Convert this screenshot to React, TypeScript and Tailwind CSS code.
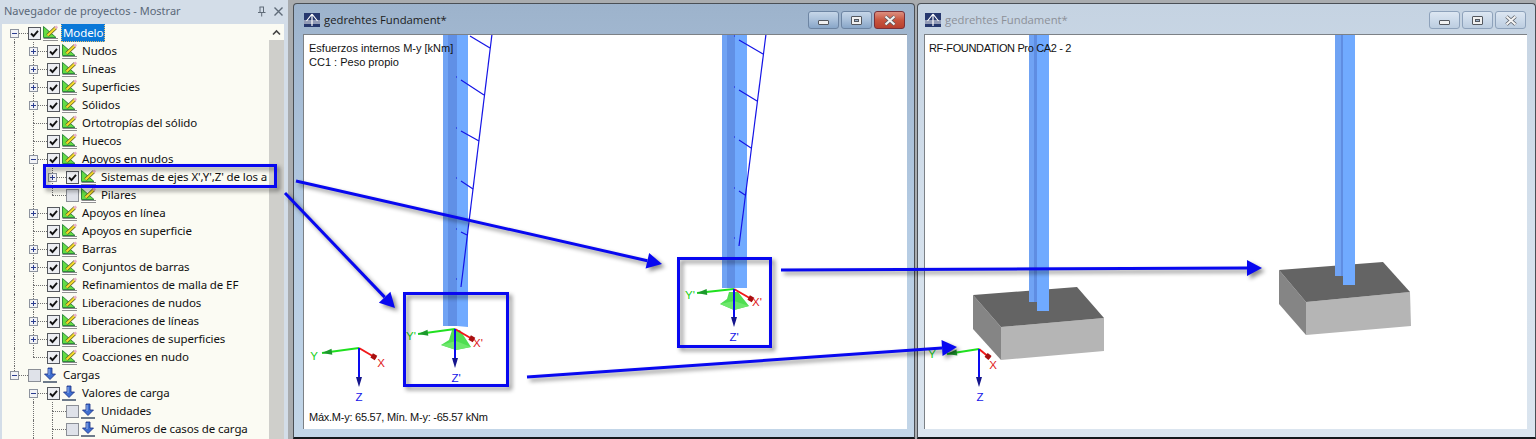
type Row = {
  label: string;
  depth: number;
  exp?: 'plus' | 'minus';
  checked: boolean;
  icon: 'model' | 'load';
  guides: number[];
  up?: boolean;
  down?: boolean;
};

const rows: Row[] = [
  { label: 'Modelo', depth: 0, exp: 'minus', checked: true, icon: 'model', guides: [], up: false, down: true },
  { label: 'Nudos', depth: 1, exp: 'plus', checked: true, icon: 'model', guides: [0], down: true },
  { label: 'Líneas', depth: 1, exp: 'plus', checked: true, icon: 'model', guides: [0], down: true },
  { label: 'Superficies', depth: 1, exp: 'plus', checked: true, icon: 'model', guides: [0], down: true },
  { label: 'Sólidos', depth: 1, exp: 'plus', checked: true, icon: 'model', guides: [0], down: true },
  { label: 'Ortotropías del sólido', depth: 1, checked: true, icon: 'model', guides: [0], down: true },
  { label: 'Huecos', depth: 1, checked: true, icon: 'model', guides: [0], down: true },
  { label: 'Apoyos en nudos', depth: 1, exp: 'minus', checked: true, icon: 'model', guides: [0], down: true },
  { label: "Sistemas de ejes X',Y',Z' de los a", depth: 2, exp: 'plus', checked: true, icon: 'model', guides: [0, 1], down: true },
  { label: 'Pilares', depth: 2, checked: false, icon: 'model', guides: [0, 1], down: false },
  { label: 'Apoyos en línea', depth: 1, exp: 'plus', checked: true, icon: 'model', guides: [0], down: true },
  { label: 'Apoyos en superficie', depth: 1, checked: true, icon: 'model', guides: [0], down: true },
  { label: 'Barras', depth: 1, exp: 'plus', checked: true, icon: 'model', guides: [0], down: true },
  { label: 'Conjuntos de barras', depth: 1, exp: 'plus', checked: true, icon: 'model', guides: [0], down: true },
  { label: 'Refinamientos de malla de EF', depth: 1, checked: true, icon: 'model', guides: [0], down: true },
  { label: 'Liberaciones de nudos', depth: 1, exp: 'plus', checked: true, icon: 'model', guides: [0], down: true },
  { label: 'Liberaciones de líneas', depth: 1, exp: 'plus', checked: true, icon: 'model', guides: [0], down: true },
  { label: 'Liberaciones de superficies', depth: 1, exp: 'plus', checked: true, icon: 'model', guides: [0], down: true },
  { label: 'Coacciones en nudo', depth: 1, checked: true, icon: 'model', guides: [0], down: false },
  { label: 'Cargas', depth: 0, exp: 'minus', checked: false, icon: 'load', guides: [], down: false },
  { label: 'Valores de carga', depth: 1, exp: 'minus', checked: true, icon: 'load', guides: [], up: false, down: true },
  { label: 'Unidades', depth: 2, checked: false, icon: 'load', guides: [1], down: true },
  { label: 'Números de casos de carga', depth: 2, checked: false, icon: 'load', guides: [1], down: true },
];

function ModelIcon() {
  return (
    <svg width="17" height="17" viewBox="0 0 17 17" className="shrink-0">
      <polygon points="1.5,1.5 1.5,12.5 14,12.5" fill="#63dc42" stroke="#2f8a3e" />
      <path d="M5.5 10.5 L14 2.5" stroke="#5a5a28" strokeWidth="3.6" />
      <path d="M5.5 10.5 L14 2.5" stroke="#f5dc2a" strokeWidth="2.2" />
      <path d="M13.2 3.3 L15.2 1.4" stroke="#eab0cc" strokeWidth="2.6" />
      <rect x="1" y="13" width="15" height="3" fill="#ffffff" />
      <path d="M1.5 15.5 H16" stroke="#222222" strokeWidth="1" strokeDasharray="1 1" />
      <path d="M1.5 13.5 H16" stroke="#8a8a8a" strokeWidth="1" />
    </svg>
  );
}

function LoadIcon() {
  return (
    <svg width="17" height="17" viewBox="0 0 17 17" className="shrink-0">
      <path d="M6 1 H10 V7 H13.5 L8 12.5 L2.5 7 H6 Z" fill="#3f6fd0" stroke="#1b2f80" strokeWidth="0.8" />
      <path d="M7 2 V8" stroke="#9db8ee" strokeWidth="1" />
      <path d="M1 15 H15" stroke="#4a5a70" strokeWidth="1.6" />
    </svg>
  );
}

function Expander({ kind }: { kind: 'plus' | 'minus' }) {
  return (
    <div className="absolute left-[5px] top-[5px] flex h-[9px] w-[9px] items-center justify-center border border-[#8d939e] bg-[#f2f3f6]">
      <svg width="7" height="7" viewBox="0 0 7 7">
        <path d="M1 3.5 H6" stroke="#2b3d8f" strokeWidth="1" />
        {kind === 'plus' && <path d="M3.5 1 V6" stroke="#2b3d8f" strokeWidth="1" />}
      </svg>
    </div>
  );
}

function Check({ checked }: { checked: boolean }) {
  return (
    <div
      className={
        'flex h-[13px] w-[13px] shrink-0 items-center justify-center border ' +
        (checked ? 'border-[#55585e] bg-[#eceef2]' : 'border-[#8b8f96] bg-[#dfe2e9]')
      }
    >
      {checked && (
        <svg width="11" height="11" viewBox="0 0 11 11">
          <path d="M2 5.5 L4.5 8 L9 2.8" fill="none" stroke="#111111" strokeWidth="1.9" />
        </svg>
      )}
    </div>
  );
}

function GuideCell({ on }: { on: boolean }) {
  return (
    <div className="relative h-full w-[19px] shrink-0">
      {on && <div className="absolute bottom-0 left-[9px] top-0 border-l border-dotted border-[#6f6f6f]" />}
    </div>
  );
}

function TreeRow({ row, first }: { row: Row; first: boolean }) {
  const cols = Array.from({ length: row.depth }, (_, i) => i);
  const up = row.up !== false;
  return (
    <div className="flex h-[18px] shrink-0 items-center pl-[3px]">
      {cols.map((i) => (
        <GuideCell key={i} on={row.guides.includes(i)} />
      ))}
      <div className="relative h-full w-[19px] shrink-0">
        {up && <div className="absolute left-[9px] top-0 h-[9px] border-l border-dotted border-[#6f6f6f]" />}
        {row.down && <div className="absolute bottom-0 left-[9px] h-[9px] border-l border-dotted border-[#6f6f6f]" />}
        <div className="absolute left-[9px] top-[9px] w-[14px] border-t border-dotted border-[#6f6f6f]" />
        {row.exp && <Expander kind={row.exp} />}
      </div>
      <div className="ml-[4px] flex items-center gap-[1px]">
        <Check checked={row.checked} />
        {row.icon === 'model' ? <ModelIcon /> : <LoadIcon />}
      </div>
      <span
        className={
          'ml-[2px] -mt-[1px] whitespace-nowrap px-[1px] text-[11.5px] leading-[17px] tracking-[-0.1px] ' +
          (first
            ? 'border border-dotted border-[#e6c070] bg-[#0a78d8] text-white'
            : 'border border-transparent text-[#101010]')
        }
      >
        {row.label}
      </span>
    </div>
  );
}

function Navigator() {
  return (
    <aside className="flex h-full w-[288px] shrink-0 flex-col bg-[#d3dde8] font-['Noto_Sans',sans-serif]">
      <div className="flex h-[22px] shrink-0 items-center justify-between pl-[4px] pr-[4px]">
        <span className="text-[11px] text-[#5a6878]">Navegador de proyectos - Mostrar</span>
        <div className="flex items-center gap-[6px]">
          <svg width="11" height="11" viewBox="0 0 11 11">
            <path d="M3.5 1 H8 M4 1 V6 M7.5 1 V6 M2 6.5 H9.5 M5.7 6.5 V10.5" stroke="#5f6b78" strokeWidth="1" fill="none" />
          </svg>
          <svg width="11" height="11" viewBox="0 0 11 11">
            <path d="M1.5 1.5 L9.5 9.5 M9.5 1.5 L1.5 9.5" stroke="#5f6b78" strokeWidth="1.4" />
          </svg>
        </div>
      </div>
      <div className="mt-[2px] flex min-h-0 flex-1 pl-[2px] pr-[4px]">
        <div className="flex min-w-0 flex-1 flex-col overflow-hidden bg-[#fbfbf3]">
          {rows.map((row, i) => (
            <TreeRow key={row.label} row={row} first={i === 0} />
          ))}
          <div className="flex h-[18px] shrink-0 pl-[3px]">
            <GuideCell on={false} />
            <GuideCell on={true} />
            <GuideCell on={true} />
          </div>
        </div>
        <div className="flex w-[15px] shrink-0 flex-col bg-[#cfcfcb]">
          <div className="flex h-[16px] shrink-0 items-center justify-center bg-[#fbfbf3]">
            <svg width="9" height="7" viewBox="0 0 9 7">
              <path d="M1 5.5 L4.5 2 L8 5.5" fill="none" stroke="#444444" strokeWidth="1.6" />
            </svg>
          </div>
        </div>
      </div>
    </aside>
  );
}

function WinButton({ kind, active }: { kind: 'min' | 'max' | 'close'; active: boolean }) {
  const red = kind === 'close' && active;
  return (
    <div
      className={
        'flex h-[18px] w-[31px] items-center justify-center rounded-[3px] border ' +
        (red
          ? 'border-[#7a3038] bg-gradient-to-b from-[#dc8f80] via-[#c8553f] to-[#b8402f]'
          : active
            ? 'border-[#6d85a3] bg-gradient-to-b from-[#c6d6e8] via-[#a9c0da] to-[#88a6c8]'
            : 'border-[#8ea2bb] bg-gradient-to-b from-[#dde7f2] via-[#ccdaea] to-[#bccde0]')
      }
    >
      {kind === 'min' && (
        <div className="mt-[5px] h-[5px] w-[11px] rounded-[1px] border border-[#53575e] bg-[#f1f1f1]" />
      )}
      {kind === 'max' && (
        <div className="flex h-[9px] w-[11px] items-center justify-center rounded-[1px] border border-[#53575e] bg-[#f1f1f1]">
          <div className="h-[3px] w-[5px] border border-[#53575e] bg-[#9db2cb]" />
        </div>
      )}
      {kind === 'close' && (
        <svg width="14" height="11" viewBox="0 0 14 11">
          <path d="M2.5 1.5 L11.5 9.5 M11.5 1.5 L2.5 9.5" stroke="#555a62" strokeWidth="3.6" />
          <path d="M2.5 1.5 L11.5 9.5 M11.5 1.5 L2.5 9.5" stroke="#f4f4f4" strokeWidth="2.2" />
        </svg>
      )}
    </div>
  );
}

function AppLogo() {
  return (
    <svg width="16" height="14" viewBox="0 0 16 14" className="shrink-0">
      <rect width="16" height="14" fill="#26386e" />
      <path d="M0 8 H16 M0 10 H16" stroke="#ffffff" strokeWidth="1" />
      <path d="M8 1 L2.5 8 M8 1 L13.5 8 M8 1 V13" stroke="#ffffff" strokeWidth="1.2" fill="none" />
    </svg>
  );
}

function Window({
  active,
  frameClass,
  barClass,
  clientClass,
  children,
  viewBox,
  drawing,
}: {
  active: boolean;
  frameClass: string;
  barClass: string;
  clientClass: string;
  children: React.ReactNode;
  viewBox: string;
  drawing: React.ReactNode;
}) {
  return (
    <div
      className={
        'flex h-[436px] shrink-0 flex-col rounded-t-[4px] border border-b-2 border-[#4a4f55] border-b-[#15181c] ' +
        frameClass +
        (active
          ? ' bg-gradient-to-b from-[#9db3cc] via-[#b4cbe3] to-[#c3d6e8]'
          : ' bg-gradient-to-b from-[#c5d3e2] via-[#d4e0ec] to-[#dbe5ef]')
      }
    >
      <div className={'flex h-[30px] shrink-0 items-center justify-between pt-[2px] ' + barClass}>
        <div className="flex items-center gap-[4px]">
          <AppLogo />
          <span
            className={
              "font-['Open_Sans',sans-serif] text-[11.3px] " + (active ? 'text-[#1c1c1c]' : 'text-[#8c9098]')
            }
          >
            gedrehtes Fundament*
          </span>
        </div>
        <div className="flex gap-[2px]">
          <WinButton kind="min" active={active} />
          <WinButton kind="max" active={active} />
          <WinButton kind="close" active={active} />
        </div>
      </div>
      <div
        className={
          "relative mb-[8px] flex min-h-0 flex-1 flex-col justify-between overflow-hidden border-l border-t border-[#7c8186] bg-white pb-[5px] pr-[5px] pt-[6px] font-['Liberation_Sans',sans-serif] text-[11px] leading-[14px] text-[#111111] " +
          clientClass
        }
      >
        <svg className="absolute inset-0 h-full w-full" viewBox={viewBox} preserveAspectRatio="none">
          {drawing}
        </svg>
        {children}
      </div>
    </div>
  );
}

type Pt = [number, number];

// dark cone at the end of an axis
function Cone({ from, tip, len, half, fill }: { from: Pt; tip: Pt; len: number; half: number; fill: string }) {
  const a = Math.atan2(tip[1] - from[1], tip[0] - from[0]);
  const bx = tip[0] - Math.cos(a) * len;
  const by = tip[1] - Math.sin(a) * len;
  const nx = -Math.sin(a) * half;
  const ny = Math.cos(a) * half;
  return <polygon points={`${tip[0]},${tip[1]} ${bx + nx},${by + ny} ${bx - nx},${by - ny}`} fill={fill} />;
}

function Axes({
  o,
  y,
  x,
  z,
  yl,
  xl,
  zl,
  suffix = '',
}: {
  o: Pt;
  y: Pt;
  x: Pt;
  z: Pt;
  yl: Pt;
  xl: Pt;
  zl: Pt;
  suffix?: string;
}) {
  const a = Math.atan2(x[1] - o[1], x[0] - o[0]);
  const blobStart: Pt = [x[0] - Math.cos(a) * 5, x[1] - Math.sin(a) * 5];
  return (
    <g fontFamily="'Liberation Sans', sans-serif" fontSize="11.5" textAnchor="middle">
      <line x1={o[0]} y1={o[1]} x2={y[0]} y2={y[1]} stroke="#1fe01f" strokeWidth="2" />
      <Cone from={o} tip={y} len={10} half={3} fill="#1c9a2c" />
      <line x1={o[0]} y1={o[1]} x2={x[0]} y2={x[1]} stroke="#f01818" strokeWidth="2" />
      <line x1={blobStart[0]} y1={blobStart[1]} x2={x[0]} y2={x[1]} stroke="#a80f0f" strokeWidth="5" />
      <line x1={o[0]} y1={o[1]} x2={z[0]} y2={z[1] - 6} stroke="#0a0af0" strokeWidth="2" />
      <Cone from={o} tip={z} len={10} half={3} fill="#14148c" />
      <text x={yl[0]} y={yl[1]} fill="#18d018">{`Y${suffix}`}</text>
      <text x={xl[0]} y={xl[1]} fill="#e02020">{`X${suffix}`}</text>
      <text x={zl[0]} y={zl[1]} fill="#1414e8">{`Z${suffix}`}</text>
    </g>
  );
}

function Diagram({
  start,
  end,
  ticks,
  dotX,
  dots,
}: {
  start: Pt;
  end: Pt;
  ticks: number[][];
  dotX: number;
  dots: number[];
}) {
  return (
    <g stroke="#1414e6">
      <line x1={start[0]} y1={start[1]} x2={end[0]} y2={end[1]} strokeWidth="1.2" />
      {ticks.map((t) => (
        <line key={t[1]} x1={t[0]} y1={t[1]} x2={t[2]} y2={t[3]} strokeWidth="1.2" />
      ))}
      {dots.map((d) => (
        <line key={d} x1={dotX} y1={d} x2={dotX + 1} y2={d} strokeWidth="1" />
      ))}
    </g>
  );
}

function Footing({ top, left, front }: { top: string; left: string; front: string }) {
  return (
    <g>
      <polygon points={left} fill="#858585" />
      <polygon points={front} fill="#b5b5b5" />
      <polygon points={top} fill="#646464" />
    </g>
  );
}

function Window1Drawing() {
  return (
    <g>
      {/* columna izquierda */}
      <rect x="443" y="30" width="5" height="296" fill="#70a3f4" />
      <rect x="448" y="30" width="9" height="296" fill="#6090e6" />
      <polygon points="457,30 468,30 468,327 457,326" fill="#70aaff" />
      <Diagram
        start={[492, 34]}
        end={[461, 287]}
        ticks={[
          [470, 36, 490, 48],
          [461, 80, 484, 95],
          [461, 131, 479, 141],
          [461, 181, 473, 189],
          [461, 232, 467, 235],
        ]}
        dotX={456}
        dots={[77, 128, 178, 229, 279]}
      />
      <polygon points="452,330 460,330 471,347 456,350 441,345 449,340" fill="#4fde52" />
      <polygon points="441,345 456,350 471,347 456,341" fill="#6ee86c" />
      <Axes o={[455, 329]} y={[418, 334]} x={[474, 340]} z={[455, 368]} yl={[411, 340]} xl={[478, 347]} zl={[456, 382]} suffix="'" />
      <Axes o={[359, 348]} y={[322, 353]} x={[376, 358]} z={[359, 387]} yl={[314, 360]} xl={[381, 367]} zl={[359, 401]} />
      {/* columna derecha */}
      <rect x="722" y="30" width="5" height="258" fill="#70a3f4" />
      <rect x="727" y="30" width="8" height="258" fill="#6090e6" />
      <rect x="735" y="30" width="12" height="258" fill="#70aaff" />
      <Diagram
        start={[766, 34]}
        end={[739, 246]}
        ticks={[
          [739, 40, 763, 54],
          [739, 90, 757, 101],
          [739, 140, 751, 148],
          [739, 191, 745, 195],
        ]}
        dotX={734}
        dots={[36, 87, 137, 188, 238]}
      />
      <polygon points="729,292 738,292 749,306 734,310 720,304 727,299" fill="#4fde52" />
      <polygon points="720,304 734,310 749,306 734,301" fill="#6ee86c" />
      <Axes o={[734, 289]} y={[697, 293]} x={[753, 300]} z={[734, 327]} yl={[690, 299]} xl={[757, 306]} zl={[734, 341]} suffix="'" />
    </g>
  );
}

function Window2Drawing() {
  return (
    <g>
      <Footing
        top="973,295 1077,287 1104,318 1001,327"
        left="973,295 1001,327 1001,360 973,329"
        front="1001,327 1104,318 1104,351 1001,360"
      />
      <rect x="1029" y="30" width="5" height="272" fill="#70a3f4" />
      <rect x="1034" y="30" width="3" height="272" fill="#5f8de2" />
      <rect x="1037" y="30" width="12" height="281" fill="#70aaff" />
      <Footing
        top="1279,270 1383,262 1410,292 1306,302"
        left="1279,270 1306,302 1306,335 1279,304"
        front="1306,302 1410,292 1411,326 1306,335"
      />
      <rect x="1335" y="30" width="6" height="246" fill="#70a3f4" />
      <rect x="1341" y="30" width="2" height="246" fill="#5f8de2" />
      <rect x="1343" y="30" width="12" height="255" fill="#70aaff" />
      <Axes o={[979, 349]} y={[947, 354]} x={[990, 358]} z={[979, 387]} yl={[932, 358]} xl={[993, 369]} zl={[980, 401]} />
    </g>
  );
}

function Callout({ x1, y1, x2, y2 }: { x1: number; y1: number; x2: number; y2: number }) {
  const a = Math.atan2(y2 - y1, x2 - x1);
  const len = 15;
  const bx = x2 - Math.cos(a) * len;
  const by = y2 - Math.sin(a) * len;
  return (
    <g>
      <line x1={x1} y1={y1} x2={bx} y2={by} stroke="#0808f0" strokeWidth="3" />
      <Cone from={[x1, y1]} tip={[x2, y2]} len={len} half={8} fill="#0808f0" />
    </g>
  );
}

function Annotations() {
  return (
    <svg
      className="pointer-events-none absolute inset-0 h-full w-full drop-shadow-[3px_3px_2px_rgba(0,0,0,0.45)]"
      viewBox="0 0 1536 439"
    >
      <rect x="44.5" y="165.5" width="231" height="21" fill="none" stroke="#0808f0" strokeWidth="3" />
      <rect x="404.5" y="293.5" width="103" height="92" fill="none" stroke="#0808f0" strokeWidth="3" />
      <rect x="678.5" y="258.5" width="92" height="88" fill="none" stroke="#0808f0" strokeWidth="3" />
      <Callout x1={285} y1={193} x2={395} y2={308} />
      <Callout x1={296} y1={181} x2={662} y2={264} />
      <Callout x1={781} y1={270} x2={1262} y2={268} />
      <Callout x1={527} y1={377} x2={957} y2={347} />
    </svg>
  );
}

export default function App() {
  return (
    <div className="relative flex h-[439px] w-[1536px] overflow-hidden bg-[#a9acaf]">
      <Navigator />
      <div className="ml-[5px] flex gap-[2px] pt-[3px]">
        <Window
          active
          frameClass="w-[622px]"
          barClass="pl-[10px] pr-[9px]"
          clientClass="ml-[9px] mr-[7px] pl-[5px]"
          viewBox="304 35 603 394"
          drawing={<Window1Drawing />}
        >
          <div className="relative">
            <p>Esfuerzos internos M-y [kNm]</p>
            <p>CC1 : Peso propio</p>
          </div>
          <p className="relative tracking-[-0.25px]">Máx.M-y: 65.57, Mín. M-y: -65.57 kNm</p>
        </Window>
        <Window
          active={false}
          frameClass="w-[619px]"
          barClass="pl-[7px] pr-[9px]"
          clientClass="ml-[6px] mr-[8px] pl-[4px]"
          viewBox="925 35 602 394"
          drawing={<Window2Drawing />}
        >
          <p className="relative tracking-[-0.35px]">RF-FOUNDATION Pro CA2 - 2</p>
        </Window>
      </div>
      <Annotations />
    </div>
  );
}
